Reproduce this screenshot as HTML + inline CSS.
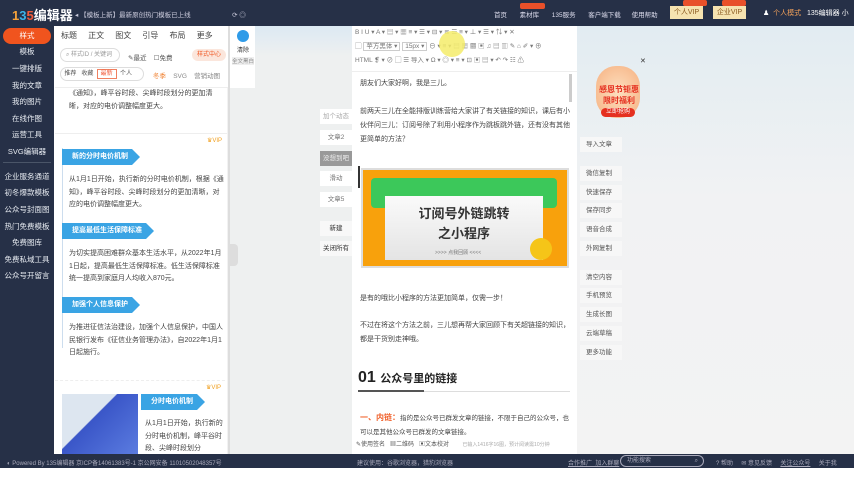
<!DOCTYPE html>
<html><head><meta charset="utf-8"><style>
*{margin:0;padding:0;box-sizing:border-box}
body{width:854px;height:480px;overflow:hidden;position:relative;background:#fff;font-family:"Liberation Sans","Noto Sans CJK SC",sans-serif;font-size:8px;color:#333}
.a{position:absolute}
.top{left:0;top:0;width:854px;height:26px;background:#263047;color:#fff}
.side{left:0;top:26px;width:54px;height:428px;background:#263047}
.side div{position:absolute;left:0;width:54px;text-align:center;color:#e8ecf2;font-size:7.5px}
.mid{left:55px;top:26px;width:175px;height:428px;background:#fff}
.gray{left:230px;top:26px;width:122px;height:428px;background:#eef0f0}
.ed{left:352px;top:26px;width:225px;height:428px;background:#fff}
.rt{left:577px;top:26px;width:277px;height:428px;background:linear-gradient(#e2ecf2,#f1f2f3 40%,#f3f3f3)}
.bot{left:0;top:454px;width:854px;height:14px;background:#263047;color:#aab;font-size:6px}
.btn{position:absolute;left:580px;width:42px;height:15px;background:#f7f7f7;color:#555;font-size:6.5px;line-height:15px;padding-left:6px}
.gb{position:absolute;left:320px;width:32px;height:15px;background:#fff;color:#777;font-size:6.5px;line-height:15px;text-align:center}
.bar{position:absolute;height:16px;background:#3aa4e4;color:#fff;font-size:7px;font-weight:bold;line-height:16px;padding-left:10px}
.bar:after{content:"";position:absolute;right:-8px;top:0;border-left:8px solid #3aa4e4;border-top:8px solid transparent;border-bottom:8px solid transparent}
.p{position:absolute;font-size:7px;line-height:12.5px;color:#444}
.e{position:absolute;left:360px;font-size:7px;line-height:14px;color:#444;width:210px}
</style></head><body>
<div class="a top">
 <div class="a" style="left:12px;top:5px;font-size:13px;font-weight:bold;color:#fff"><span style="color:#f7a33a">1</span><span style="color:#3bb3e8">3</span><span style="color:#f05a3a">5</span>编辑器</div>
 <div class="a" style="left:75px;top:9px;font-size:6.5px;color:#ccd">◂ 【模板上新】最新原创热门模板已上线 &nbsp;&nbsp;&nbsp;&nbsp;&nbsp;&nbsp;&nbsp;&nbsp;&nbsp;&nbsp;&nbsp;&nbsp;&nbsp;&nbsp;&nbsp;&nbsp;&nbsp;&nbsp;&nbsp;&nbsp;&nbsp;&nbsp;⟳ ◎</div>
 <div class="a" style="left:494px;top:9px;font-size:6.5px;color:#dde">首页 &nbsp;&nbsp;&nbsp;&nbsp;&nbsp; 素材库 &nbsp;&nbsp;&nbsp;&nbsp;&nbsp; 135服务 &nbsp;&nbsp;&nbsp;&nbsp;&nbsp; 客户端下载 &nbsp;&nbsp;&nbsp;&nbsp; 使用帮助</div>
 <div class="a" style="left:520px;top:3px;width:25px;height:6px;background:#e8502a;border-radius:2px"></div>
 <div class="a" style="left:670px;top:6px;width:33px;height:13px;background:#f6e3b0;color:#8a5a20;font-size:7px;text-align:center;line-height:13px">个人VIP</div>
 <div class="a" style="left:713px;top:6px;width:33px;height:13px;background:#f6e3b0;color:#8a5a20;font-size:7px;text-align:center;line-height:13px">企业VIP</div>
 <div class="a" style="left:683px;top:0;width:24px;height:6px;background:#e8502a;border-radius:2px"></div>
 <div class="a" style="left:722px;top:0;width:24px;height:6px;background:#e8502a;border-radius:2px"></div>
 <div class="a" style="left:763px;top:8px;font-size:7px;color:#fff">♟ &nbsp;<span style="color:#f0a05a">个人模式</span> &nbsp;&nbsp;135编辑器 小</div>
</div>
<div class="a side">
 <div style="top:2px;left:3px;width:48px;height:16px;background:#f0541e;border-radius:8px;line-height:16px;color:#fff">样式</div>
 <div style="top:20px">模板</div><div style="top:37px">一键排版</div><div style="top:54px">我的文章</div><div style="top:70px">我的图片</div><div style="top:87px">在线作图</div><div style="top:103px">运营工具</div><div style="top:120px">SVG编辑器</div>
 <div style="top:136px;height:1px;background:#4a5568;left:3px;width:48px"></div>
 <div style="top:145px">企业服务通道</div><div style="top:161px">初冬爆款模板</div><div style="top:178px">公众号封面图</div><div style="top:195px">热门免费模板</div><div style="top:211px">免费图库</div><div style="top:228px">免费私域工具</div><div style="top:244px">公众号开留言</div>
</div>
<div class="a mid">
 <div class="a" style="left:6px;top:4px;font-size:8px;color:#444;word-spacing:0">标题 &nbsp;&nbsp;&nbsp; 正文 &nbsp;&nbsp;&nbsp; 图文 &nbsp;&nbsp;&nbsp; 引导 &nbsp;&nbsp;&nbsp; 布局 &nbsp;&nbsp;&nbsp; 更多</div>
 <div class="a" style="left:5px;top:22px;width:60px;height:14px;border:1px solid #ddd;border-radius:7px;font-size:6px;color:#999;line-height:12px;padding-left:5px">⌕ 样式ID / 关键词</div>
 <div class="a" style="left:73px;top:26px;font-size:6.5px;color:#555">✎最近 &nbsp;&nbsp; ☐免费</div>
 <div class="a" style="left:137px;top:23px;width:34px;height:12px;background:#fbe6dc;border-radius:6px;font-size:6px;color:#f0541e;text-align:center;line-height:12px">样式中心</div>
 <div class="a" style="left:5px;top:41px;width:84px;height:14px;border:1px solid #ddd;border-radius:7px;font-size:6px;line-height:12px;color:#555">&nbsp;&nbsp;推荐 &nbsp;&nbsp;收藏 &nbsp;<span style="border:1px solid #f08060;color:#f05a3a;padding:1px 3px">最新</span> &nbsp;个人</div>
 <div class="a" style="left:98px;top:44px;font-size:6.5px;color:#888"><span style="color:#f08030">冬季</span> &nbsp;&nbsp; SVG &nbsp;&nbsp; 营销动图</div>
 <div class="a" style="left:0;top:61px;width:175px;height:1px;background:#eee"></div>
 <div class="p" style="left:14px;top:62px;width:155px">《通知》，峰平谷时段、尖峰时段划分的更加清晰，对应的电价调整幅度更大。</div>
 <div class="a" style="left:0;top:107px;width:175px;height:1px;background:#eee"></div>
 <div class="a" style="left:152px;top:111px;font-size:6px;color:#f0a020">♛VIP</div>
 <div class="a" style="left:7px;top:122px;width:1px;height:200px;background:#cde"></div>
 <div class="bar" style="left:7px;top:123px;width:70px">新的分时电价机制</div>
 <div class="p" style="left:14px;top:148px;width:156px">从1月1日开始，执行新的分时电价机制，根据《通知》，峰平谷时段、尖峰时段划分的更加清晰，对应的电价调整幅度更大。</div>
 <div class="bar" style="left:7px;top:197px;width:84px">提高最低生活保障标准</div>
 <div class="p" style="left:14px;top:222px;width:156px">为切实提高困难群众基本生活水平，从2022年1月1日起，提高最低生活保障标准。低生活保障标准统一提高到家庭月人均收入870元。</div>
 <div class="bar" style="left:7px;top:271px;width:70px">加强个人信息保护</div>
 <div class="p" style="left:14px;top:296px;width:156px">为推进征信法治建设，加强个人信息保护，中国人民银行发布《征信业务管理办法》，自2022年1月1日起施行。</div>
 <div class="a" style="left:0;top:354px;width:175px;border-top:1px dashed #eee"></div>
 <div class="a" style="left:151px;top:358px;font-size:6px;color:#f0a020">♛VIP</div>
 <div class="a" style="left:7px;top:368px;width:76px;height:60px;background:linear-gradient(135deg,#dde6f0 40%,#3a56c8 41%,#5b7ce0)"></div>
 <div class="bar" style="left:86px;top:368px;width:56px">分时电价机制</div>
 <div class="p" style="left:90px;top:392px;width:80px">从1月1日开始，执行新的分时电价机制，峰平谷时段、尖峰时段划分</div>
 <div class="a" style="left:172px;top:62px;width:3px;height:366px;background:#f2f2f2"></div>
</div>
<div class="a" style="left:228px;top:26px;width:3px;height:428px;background:#ddd"></div>
<div class="a gray">
 <div class="a" style="left:0;top:0;width:122px;height:30px;background:linear-gradient(#dce9f3,#eef0f0)"></div>
 <div class="a" style="left:0;top:0;width:25px;height:62px;background:#fff"></div>
 <div class="a" style="left:7px;top:4px;width:12px;height:12px;border-radius:6px;background:#2f9be8"></div>
 <div class="a" style="left:7px;top:19px;font-size:6px;color:#333">清除</div>
 <div class="a" style="left:2px;top:31px;font-size:5.5px;color:#888;background:#eee">全文黑白</div>
 <div class="a" style="left:0;top:218px;width:8px;height:22px;background:#ddd;border-radius:0 4px 4px 0"></div>
</div>
<div class="gb" style="top:109px;color:#aaa">加个动态</div>
<div class="gb" style="top:130px">文章2</div>
<div class="gb" style="top:151px;background:#999;color:#eee">没想到吧</div>
<div class="gb" style="top:171px">滑动</div>
<div class="gb" style="top:192px">文章5</div>
<div class="gb" style="top:221px;background:#f8f8f8;color:#333">新建</div>
<div class="gb" style="top:241px;background:#f8f8f8;color:#333">关闭所有</div>
<div class="a ed">
 <div class="a" style="left:0;top:0;width:225px;height:46px;background:#fff;border-bottom:1px solid #eee;font-size:6.5px;color:#777;line-height:14px;padding-left:3px;white-space:nowrap;overflow:hidden">B I U ▾ A ▾ ▤ ▾ ▦ ≡ ▾ ☰ ▾ ⊟ ▾ ≣ ☰ ≡ ▾ ⊥ ▾ ☰ ▾ ⇅ ▾ ✕<br>▢ <span style="border:1px solid #ccc;padding:0 2px">苹方黑体 ▾</span> <span style="border:1px solid #ccc;padding:0 2px">15px ▾</span> ⊖ ▾ ≡ ▾ ▤ ▦ ▩ ▣ ♫ ▤ ▥ ✎ ⌂ ✐ ▾ ⊕<br>HTML ❡ ▾ ⊘ ▢ ☰ 导入 ▾ Ω ▾ ◎ ▾ ≡ ▾ ⊡ ▣ ▤ ▾ ↶ ↷ ☷ ⚠</div>
 <div class="a" style="left:87px;top:5px;width:26px;height:26px;border-radius:13px;background:#f5ec6a;opacity:.85"></div>
 <div class="a" style="left:217px;top:48px;width:3px;height:28px;background:#ccc"></div>
</div>
<div class="e" style="top:77px">朋友们大家好啊，我是三儿。</div>
<div class="e" style="top:105px">前两天三儿在全能排版训练营给大家讲了有关链接的知识，课后有小伙伴问三儿：订阅号除了利用小程序作为跳板跳外链，还有没有其他更简单的方法？</div>
<div class="a" style="left:358px;top:166px;width:2px;height:22px;background:#333"></div>
<div class="a" style="left:361px;top:168px;width:208px;height:100px;background:#f8a10c;border:2px solid #ddd"></div>
<div class="a" style="left:371px;top:178px;width:186px;height:30px;background:#3cc85a;border-radius:4px"></div>
<div class="a" style="left:385px;top:196px;width:158px;height:64px;background:linear-gradient(#fafafa,#e4e4e4)"></div>
<div class="a" style="left:385px;top:204px;width:158px;text-align:center;font-size:13px;font-weight:bold;color:#333;line-height:20px">订阅号外链跳转<br>之小程序</div>
<div class="a" style="left:435px;top:249px;font-size:5px;color:#777">>>>> 点我回顾 <<<<</div>
<div class="a" style="left:530px;top:238px;width:22px;height:22px;border-radius:11px;background:#f5c518"></div>
<div class="e" style="top:292px">是有的哦比小程序的方法更加简单，仅需一步！</div>
<div class="e" style="top:319px">不过在将这个方法之前，三儿想再帮大家回顾下有关超链接的知识，都是干货别走神哦。</div>
<div class="a" style="left:358px;top:369px;font-size:16px;font-weight:bold;color:#222">01 <span style="font-size:11px">公众号里的链接</span></div>
<div class="a" style="left:358px;top:391px;width:212px;height:1px;background:#ddd"></div>
<div class="a" style="left:358px;top:390px;width:66px;height:2px;background:#555"></div>
<div class="e" style="top:411px;font-size:6.5px"><b style="color:#f0602a;font-size:8px">一、内链：</b>指的是公众号已群发文章的链接，不限于自己的公众号，也可以是其他公众号已群发的文章链接。</div>
<div class="a" style="left:352px;top:438px;width:225px;height:16px;background:#fff;font-size:6px;color:#555;line-height:14px;padding-left:4px">✎使用签名 &nbsp;&nbsp;▦二维码 &nbsp;&nbsp;▣文本校对 &nbsp;&nbsp;&nbsp;&nbsp;&nbsp;&nbsp;&nbsp;<span style="color:#aaa;font-size:5px">已输入1416字16图，预计阅读需10分钟</span></div>
<div class="a rt"></div>
<div class="a" style="left:640px;top:57px;font-size:7px;color:#333">✕</div>
<div class="a" style="left:596px;top:66px;width:44px;height:52px;border-radius:20px;background:radial-gradient(#fde0c0,#f6b080);"></div>
<div class="a" style="left:594px;top:84px;font-size:8px;font-weight:bold;color:#e53020;line-height:11px;text-align:center;width:50px">感恩节钜惠<br>限时福利</div>
<div class="a" style="left:601px;top:108px;width:34px;height:9px;border-radius:5px;background:#e53020;color:#fff;font-size:6px;text-align:center;line-height:9px">立即抢购</div>
<div class="btn" style="top:137px">导入文章</div>
<div class="btn" style="top:166px">微信复制</div>
<div class="btn" style="top:185px">快速保存</div>
<div class="btn" style="top:203px">保存同步</div>
<div class="btn" style="top:222px">语音合成</div>
<div class="btn" style="top:241px">外网复制</div>
<div class="btn" style="top:270px">清空内容</div>
<div class="btn" style="top:288px">手机预览</div>
<div class="btn" style="top:307px">生成长图</div>
<div class="btn" style="top:326px">云端草稿</div>
<div class="btn" style="top:345px">更多功能</div>
<div class="a bot">
 <div class="a" style="left:7px;top:4px">◐ Powered By 135编辑器 京ICP备14061383号-1 京公网安备 11010502048357号</div>
 <div class="a" style="left:357px;top:4px">建议使用：谷歌浏览器，猎豹浏览器</div>
 <div class="a" style="left:568px;top:4px;text-decoration:underline">合作推广 &nbsp;加入群聊</div>
 <div class="a" style="left:620px;top:1px;width:84px;height:12px;border:1px solid #aab;border-radius:6px;padding-left:6px;line-height:10px">功能搜索 <span style="float:right;margin-right:5px">⌕</span></div>
 <div class="a" style="left:716px;top:4px">? 帮助 &nbsp;&nbsp;&nbsp;&nbsp;✉ 意见反馈 &nbsp;&nbsp;&nbsp; <u>关注公众号</u> &nbsp;&nbsp;&nbsp; 关于我</div>
</div>
</body></html>
